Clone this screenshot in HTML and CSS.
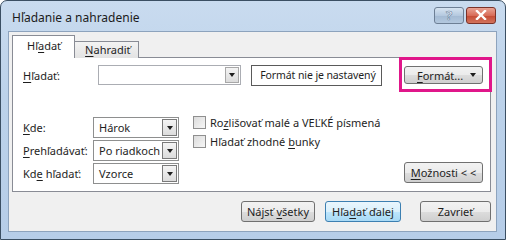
FILE: index.html
```html
<!DOCTYPE html>
<html lang="sk">
<head>
  <meta charset="UTF-8">
  <title>Hľadanie a nahradenie</title>
  <link rel="stylesheet" href="styles.css">
</head>
<body>
  <div class="window">
    <div class="titlebar">
      <span class="title">Hľadanie a nahradenie</span>
      <div class="caption-btns">
        <span class="cap help">?</span>
        <span class="cap close">
          <svg width="12" height="10" viewBox="0 0 12 10"><path d="M2 1 L10 9 M10 1 L2 9" stroke="#fff" stroke-width="2.4" stroke-linecap="square"/></svg>
        </span>
      </div>
    </div>

    <div class="client">
      <div class="tabs">
        <span class="tab active">Hľ<u>a</u>dať</span>
        <span class="tab"><u>N</u>ahradiť</span>
      </div>

      <div class="panel">
        <div class="row-find">
          <span class="lbl find-lbl"><u>H</u>ľadať:</span>
          <div class="combo">
            <span class="drop"><i class="tri"></i></span>
          </div>
          <span class="fmt-box">Formát nie je nastavený</span>
          <span class="btn fmt-btn"><span><u>F</u>ormát...</span><i class="tri"></i></span>
        </div>

        <div class="lower">
          <div class="fields">
            <span class="lbl"><u>K</u>de:</span>
            <div class="select"><span>Hárok</span><span class="drop"><i class="tri"></i></span></div>
            <span class="lbl"><u>P</u>rehľadávať:</span>
            <div class="select"><span>Po riadkoch</span><span class="drop"><i class="tri"></i></span></div>
            <span class="lbl">Kd<u>e</u> hľadať:</span>
            <div class="select"><span>Vzorce</span><span class="drop"><i class="tri"></i></span></div>
          </div>
          <div class="checks">
            <label class="check"><span class="box"></span><span>Ro<u>z</u>lišovať malé a VEĽKÉ písmená</span></label>
            <label class="check"><span class="box"></span><span>Hľadať zhodné <u>b</u>unky</span></label>
          </div>
          <span class="btn more"><span><u>M</u>ožnosti &lt; &lt;</span></span>
        </div>

        <div class="highlight"></div>
      </div>

      <div class="actions">
        <span class="btn act"><span>Nájsť <u>v</u>šetky</span></span>
        <span class="btn act default"><span>Hľa<u>d</u>ať ďalej</span></span>
        <span class="btn act close-btn"><span>Zavrieť</span></span>
      </div>
    </div>
  </div>
</body>
</html>
```

FILE: styles.css
```css
body {
  margin: 0;
  background: #ffffff;
  font-family: "Noto Sans", "Open Sans", sans-serif;
  font-size: 11px;
  color: #1e1e1e;
  white-space: nowrap;
}

u {
  text-decoration-thickness: 1px;
  text-underline-offset: 2px;
}

.window {
  position: relative;
  width: 506px;
  height: 240px;
  box-sizing: border-box;
  border: 1px solid #3b4f63;
  border-radius: 7px 7px 0 0;
  background: linear-gradient(180deg, #c9dbef 0%, #bcd2ea 40%, #b6cde8 100%);
  padding: 0 8px 7px 7px;
  display: flex;
  flex-direction: column;
}

.titlebar {
  height: 30px;
  display: flex;
  align-items: center;
  justify-content: space-between;
}

.title {
  margin-left: 4px;
  margin-top: 3px;
  font-size: 12px;
  color: #1b1b1b;
}

.caption-btns {
  display: flex;
  gap: 2px;
  margin-right: 1px;
  margin-top: -2px;
}

.cap {
  height: 17px;
  border: 1px solid #6d7f95;
  border-radius: 3px;
  display: flex;
  align-items: center;
  justify-content: center;
  box-sizing: border-box;
}

.help {
  width: 30px;
  background: linear-gradient(180deg, #d6e3f1 0%, #b5c9df 50%, #a4bad3 51%, #b3c8de 100%);
  color: #eef3f9;
  -webkit-text-stroke: 0.6px #6b819c;
  font-weight: bold;
  font-size: 13px;
}

.close {
  width: 30px;
  border-color: #7a3229;
  background: linear-gradient(180deg, #e9a394 0%, #d86c59 50%, #c54a34 51%, #d2735c 100%);
}

.client {
  flex: 1;
  background: #f0f0f0;
  border: 1px solid #8da3bd;
  padding: 3px 5px 0 3px;
  display: flex;
  flex-direction: column;
}

.tabs {
  display: flex;
  align-items: flex-end;
  height: 23px;
  position: relative;
  z-index: 1;
}

.tab {
  height: 16px;
  padding: 0 7px 0 8px;
  border: 1px solid #898c95;
  border-bottom: none;
  background: linear-gradient(180deg, #f3f3f3, #e3e3e3);
  line-height: 16px;
  margin-left: -1px;
}

.tab.active {
  height: 22px;
  line-height: 20px;
  background: #ffffff;
  padding: 0 13px 0 14px;
  margin-left: 0;
}

.tab.active + .tab {
  margin-left: 0;
  border-left: none;
  padding-left: 10px;
}

.panel {
  position: relative;
  height: 135px;
  box-sizing: border-box;
  border: 1px solid #898c95;
  background: #ffffff;
  margin-top: -1px;
  padding: 6px 7px 0 10px;
}

.row-find {
  display: flex;
  align-items: center;
  height: 22px;
}

.find-lbl {
  width: 75px;
}

.combo {
  width: 143px;
  height: 20px;
  box-sizing: border-box;
  border: 1px solid #abadb3;
  background: #ffffff;
  display: flex;
  justify-content: flex-end;
  align-items: center;
  padding-right: 1px;
}

.drop {
  width: 14px;
  height: 16px;
  box-sizing: border-box;
  border: 1px solid #a8a8a8;
  background: linear-gradient(180deg, #f4f4f4, #dcdcdc);
  display: flex;
  align-items: center;
  justify-content: center;
}

.tri {
  width: 0;
  height: 0;
  border-left: 3px solid transparent;
  border-right: 3px solid transparent;
  border-top: 4px solid #1e1e1e;
}

.fmt-box {
  margin-left: 10px;
  width: 131px;
  height: 21px;
  box-sizing: border-box;
  border: 1px solid #5a5a5a;
  display: flex;
  align-items: center;
  justify-content: center;
  font-size: 10.5px;
  letter-spacing: -0.1px;
  padding-left: 3px;
}

.btn {
  box-sizing: border-box;
  border: 1px solid #707070;
  border-radius: 3px;
  background: linear-gradient(180deg, #f2f2f2 0%, #ebebeb 50%, #dddddd 51%, #cfcfcf 100%);
  display: flex;
  align-items: center;
  justify-content: center;
}

.fmt-btn {
  margin-left: auto;
  width: 79px;
  height: 18px;
  padding: 0 6px 0 12px;
  justify-content: space-between;
}

.lower {
  display: flex;
  align-items: flex-start;
  margin-top: 31px;
}

.fields {
  display: grid;
  grid-template-columns: 70px 86px;
  grid-auto-rows: 21px;
  row-gap: 2px;
  align-items: center;
}

.select {
  height: 21px;
  box-sizing: border-box;
  border: 1px solid #8e8f8f;
  display: flex;
  align-items: center;
  justify-content: space-between;
  padding: 0 1px 0 5px;
}

.select .drop {
  width: 15px;
  height: 17px;
  border-color: #7a7a7a;
}

.checks {
  margin-left: 14px;
  margin-top: -2px;
  display: flex;
  flex-direction: column;
  gap: 5px;
}

.check {
  display: flex;
  align-items: center;
  gap: 4px;
  height: 14px;
}

.box {
  width: 11px;
  height: 11px;
  border: 1px solid #8f8f8f;
  background: linear-gradient(135deg, #dcdcdc, #f6f6f6);
}

.more {
  margin-left: auto;
  margin-top: 45px;
  width: 79px;
  height: 21px;
}

.highlight {
  position: absolute;
  top: -1px;
  right: -2px;
  width: 93px;
  height: 35px;
  box-sizing: border-box;
  border: 3px solid #e0168a;
}

.actions {
  display: flex;
  justify-content: flex-end;
  gap: 10px;
  margin-top: 9px;
}

.act {
  width: 74px;
  height: 21px;
}

.act.default {
  width: 76px;
  border-color: #3c7fb1;
  background: linear-gradient(180deg, #eaf6fd 0%, #d9f0fc 50%, #bee6fd 51%, #a7d9f5 100%);
}

.close-btn {
  width: 71px;
  margin-left: 9px;
}
```
